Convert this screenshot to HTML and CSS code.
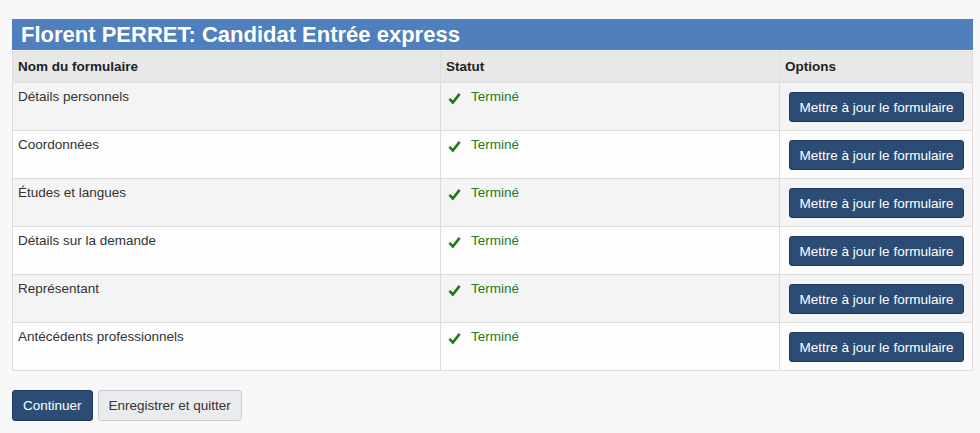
FILE: index.html
```
<!DOCTYPE html>
<html>
<head>
    <meta charset="utf-8">
    <link rel="stylesheet" href="styles.css">
</head>
<body>
    <div class="page">
        <h1 class="title">Florent PERRET: Candidat Entrée express</h1>

        <table class="forms">
            <thead>
                <tr>
                    <th class="col-name">Nom du formulaire</th>
                    <th class="col-status">Statut</th>
                    <th class="col-options">Options</th>
                </tr>
            </thead>
            <tbody>
                <tr>
                    <td>Détails personnels</td>
                    <td><span class="status"><svg class="check" viewBox="0 0 14 13"><path d="M1.5 7 L5.2 10.8 L12.5 1.5"/></svg>Terminé</span></td>
                    <td class="options"><button class="btn btn-primary">Mettre à jour le formulaire</button></td>
                </tr>
                <tr>
                    <td>Coordonnées</td>
                    <td><span class="status"><svg class="check" viewBox="0 0 14 13"><path d="M1.5 7 L5.2 10.8 L12.5 1.5"/></svg>Terminé</span></td>
                    <td class="options"><button class="btn btn-primary">Mettre à jour le formulaire</button></td>
                </tr>
                <tr>
                    <td>Études et langues</td>
                    <td><span class="status"><svg class="check" viewBox="0 0 14 13"><path d="M1.5 7 L5.2 10.8 L12.5 1.5"/></svg>Terminé</span></td>
                    <td class="options"><button class="btn btn-primary">Mettre à jour le formulaire</button></td>
                </tr>
                <tr>
                    <td>Détails sur la demande</td>
                    <td><span class="status"><svg class="check" viewBox="0 0 14 13"><path d="M1.5 7 L5.2 10.8 L12.5 1.5"/></svg>Terminé</span></td>
                    <td class="options"><button class="btn btn-primary">Mettre à jour le formulaire</button></td>
                </tr>
                <tr>
                    <td>Représentant</td>
                    <td><span class="status"><svg class="check" viewBox="0 0 14 13"><path d="M1.5 7 L5.2 10.8 L12.5 1.5"/></svg>Terminé</span></td>
                    <td class="options"><button class="btn btn-primary">Mettre à jour le formulaire</button></td>
                </tr>
                <tr>
                    <td>Antécédents professionnels</td>
                    <td><span class="status"><svg class="check" viewBox="0 0 14 13"><path d="M1.5 7 L5.2 10.8 L12.5 1.5"/></svg>Terminé</span></td>
                    <td class="options"><button class="btn btn-primary">Mettre à jour le formulaire</button></td>
                </tr>
            </tbody>
        </table>

        <div class="actions">
            <button class="btn btn-primary">Continuer</button>
            <button class="btn btn-default">Enregistrer et quitter</button>
        </div>
    </div>
</body>
</html>
```
FILE: styles.css
```
body {
    font-family: "Liberation Sans", Arial, sans-serif;
    font-size: 13.5px;
    color: #333;
    margin: 0;
    background-color: #f8f8f8;
}

.page {
    padding: 19px 7px 0 12px;
}

.title {
    margin: 0 0 1px 0;
    height: 31px;
    line-height: 31px;
    padding-left: 9px;
    background-color: #4f80bd;
    color: #ffffff;
    font-size: 22px;
    font-weight: bold;
}

.forms {
    width: 100%;
    border-collapse: collapse;
    border: 1px solid #dddddd;
}

.forms th,
.forms td {
    border: 1px solid #dddddd;
    text-align: left;
    vertical-align: top;
    padding: 5px 5px;
    line-height: 18px;
}

.forms th {
    background-color: #e8e8e8;
    color: #222;
    font-weight: bold;
    padding: 6px 5px 6px 5px;
}

.col-name { width: 417px; }
.col-status { width: 328px; }

.forms tbody tr:nth-child(odd) td {
    background-color: #f4f4f4;
}

.forms tbody tr:nth-child(even) td {
    background-color: #fdfdfd;
}

.forms td.options {
    padding: 9px 8px 8px 9px;
}

.status {
    display: flex;
    align-items: center;
    color: #247a24;
    padding-left: 2px;
}

.check {
    width: 13px;
    height: 13px;
    margin-right: 10px;
    margin-top: 3px;
}

.check path {
    fill: none;
    stroke: #1c7a1c;
    stroke-width: 2.8;
}

.btn {
    font-family: "Liberation Sans", Arial, sans-serif;
    font-size: 13.5px;
    height: 31px;
    padding: 0 10px;
    border-radius: 3px;
    cursor: pointer;
}

.btn-primary {
    background-color: #2b4d75;
    border: 1px solid #1f3a5c;
    color: #ffffff;
}

.forms .btn-primary {
    display: block;
    width: 175px;
    height: 30px;
    padding: 0;
}

.btn-default {
    background-color: #e9ebee;
    border: 1px solid #c8cbd0;
    color: #333;
}

.actions {
    display: flex;
    gap: 5px;
    margin-top: 19px;
}
```
